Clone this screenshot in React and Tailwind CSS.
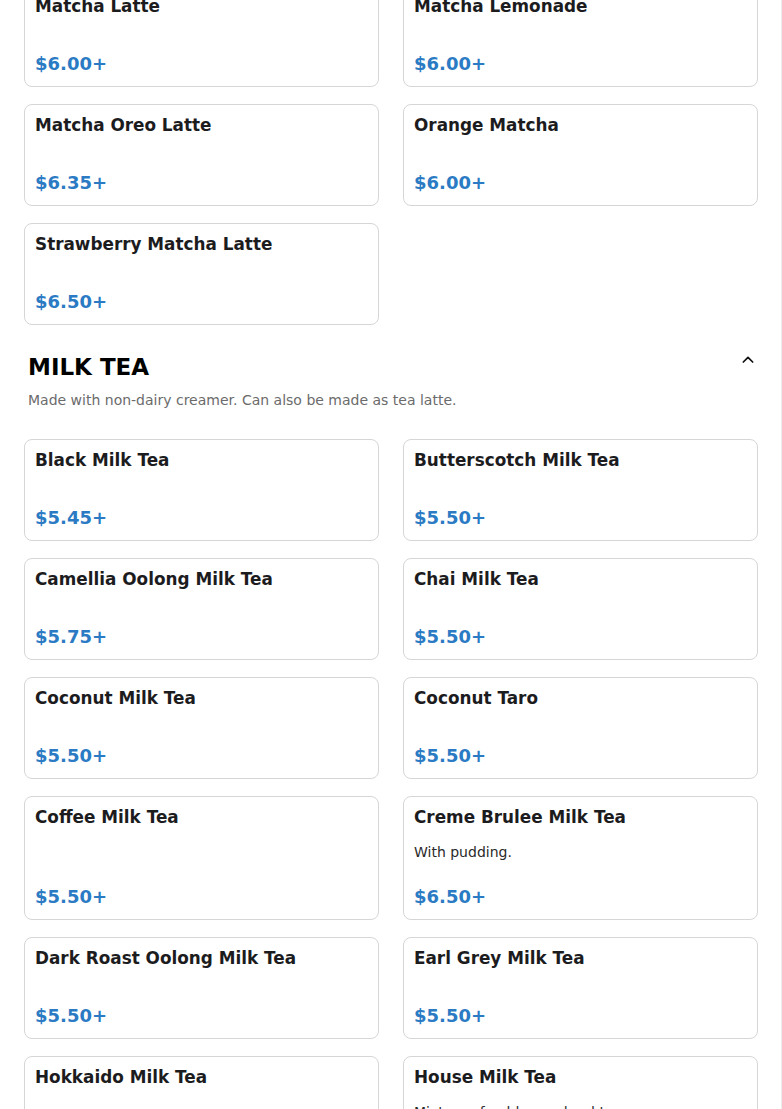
import React from 'react';

const matcha = [
  { name: 'Matcha Latte', price: '$6.00+' },
  { name: 'Matcha Lemonade', price: '$6.00+' },
  { name: 'Matcha Oreo Latte', price: '$6.35+' },
  { name: 'Orange Matcha', price: '$6.00+' },
  { name: 'Strawberry Matcha Latte', price: '$6.50+' },
];

const milkTea = [
  { name: 'Black Milk Tea', price: '$5.45+' },
  { name: 'Butterscotch Milk Tea', price: '$5.50+' },
  { name: 'Camellia Oolong Milk Tea', price: '$5.75+' },
  { name: 'Chai Milk Tea', price: '$5.50+' },
  { name: 'Coconut Milk Tea', price: '$5.50+' },
  { name: 'Coconut Taro', price: '$5.50+' },
  { name: 'Coffee Milk Tea', price: '$5.50+' },
  { name: 'Creme Brulee Milk Tea', desc: 'With pudding.', price: '$6.50+' },
  { name: 'Dark Roast Oolong Milk Tea', price: '$5.50+' },
  { name: 'Earl Grey Milk Tea', price: '$5.50+' },
  { name: 'Hokkaido Milk Tea', price: '$5.50+' },
  { name: 'House Milk Tea', desc: 'Mixture of golden and red teas.', price: '$5.50+' },
];

function ItemCard({ item }) {
  return (
    <div className="flex flex-col rounded-lg border border-[#d6d6d6] bg-white p-[10px]">
      <h3 className="text-[16.85px] font-bold leading-[20px] text-[#1c1c1e]">{item.name}</h3>
      {item.desc && (
        <p className="mt-[15px] text-[14px] leading-[20px] text-[#2a2a2a]">{item.desc}</p>
      )}
      <p className={`mt-auto text-[18px] font-bold leading-[24px] text-[#2b7bc4] ${item.desc ? 'pt-[23px]' : 'pt-[36px]'}`}>
        {item.price}
      </p>
    </div>
  );
}

function Grid({ items }) {
  return (
    <div className="grid grid-cols-2 gap-x-[24px] gap-y-[17px]">
      {items.map((it) => (
        <ItemCard key={it.name} item={it} />
      ))}
    </div>
  );
}

export default function App() {
  return (
    <div
      className="h-[1109px] w-[782px] overflow-hidden border-r border-[#ececec] bg-white"
      style={{ fontFamily: '"DejaVu Sans", "Liberation Sans", sans-serif' }}
    >
      <div className="-mt-[15px] pl-[24px] pr-[23px]">
        <Grid items={matcha} />

        {/* Milk tea section */}
        <div className="mt-[27px] pl-[4px] pr-[2px]">
          <div className="flex items-start justify-between">
            <h2 className="text-[23px] font-bold leading-[30px] text-black">MILK TEA</h2>
            <svg width="16" height="16" viewBox="0 0 24 24" fill="none" stroke="#111" strokeWidth="2.6" strokeLinecap="round" strokeLinejoin="round">
              <path d="M5 15l7-7 7 7" />
            </svg>
          </div>
          <p className="mt-[8px] text-[14px] leading-[20px] text-[#6b6b6b]">
            Made with non-dairy creamer. Can also be made as tea latte.
          </p>
        </div>

        <div className="mt-[29px]">
          <Grid items={milkTea} />
        </div>
      </div>
    </div>
  );
}
